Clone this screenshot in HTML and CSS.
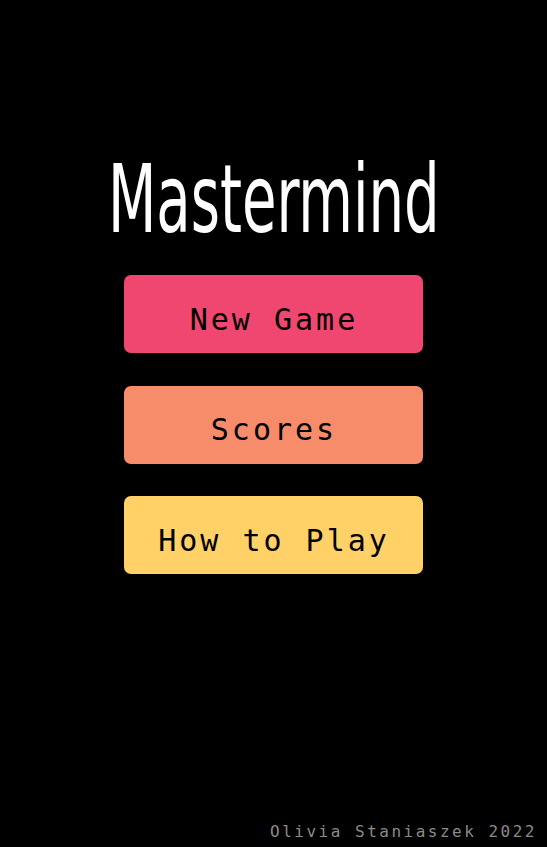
FILE: index.html
```html
<!DOCTYPE html>
<html lang="en">
<head>
<meta charset="utf-8">
<title>Mastermind</title>
<link rel="stylesheet" href="styles.css">
</head>
<body>
<main class="menu">
  <h1 class="title">Mastermind</h1>
  <nav class="buttons">
    <button class="btn btn-new">New Game</button>
    <button class="btn btn-scores">Scores</button>
    <button class="btn btn-help">How to Play</button>
  </nav>
</main>
<footer class="footer">Olivia Staniaszek 2022</footer>
</body>
</html>
```
FILE: styles.css
```css
html, body {
  margin: 0;
  padding: 0;
  background: #000;
  height: 100%;
}
body {
  display: flex;
  flex-direction: column;
  min-height: 847px;
  box-sizing: border-box;
}
.menu {
  flex: 1;
  display: flex;
  flex-direction: column;
  align-items: center;
  padding-top: 152px;
}
.title {
  margin: 0;
  color: #fff;
  font-family: "DejaVu Sans", sans-serif;
  font-stretch: condensed;
  font-weight: normal;
  font-size: 95px;
  line-height: 95px;
  height: 95px;
  transform: scaleX(0.656);
  white-space: nowrap;
}
.buttons {
  display: flex;
  flex-direction: column;
  gap: 32.5px;
  margin-top: 28px;
}
.btn {
  width: 299px;
  height: 78px;
  border: none;
  border-radius: 7px;
  padding: 10px 0 0 1px;
  font-family: "DejaVu Sans Mono", monospace;
  font-size: 30px;
  letter-spacing: 3px;
  color: #000;
  cursor: pointer;
}
.btn-new { background: #ef476f; }
.btn-scores { background: #f78c6b; }
.btn-help { background: #ffd166; }
.footer {
  text-align: right;
  padding: 0 10px 6px 0;
  font-family: "DejaVu Sans Mono", monospace;
  font-size: 16px;
  letter-spacing: 2.5px;
  color: #8a8a8a;
}
```
